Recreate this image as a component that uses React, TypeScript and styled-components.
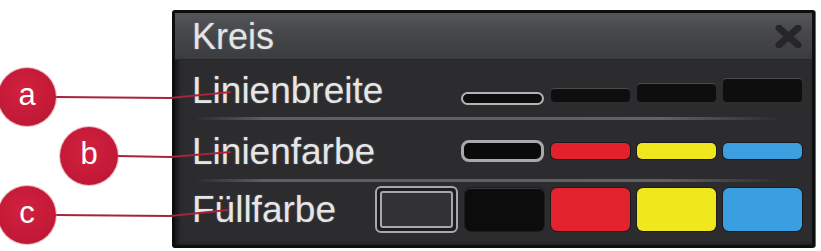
import React from 'react';
import styled, { createGlobalStyle } from 'styled-components';

const GlobalStyle = createGlobalStyle`
  html, body {
    margin: 0;
    padding: 0;
    background: #ffffff;
  }
  body {
    font-family: "Liberation Sans", Arial, sans-serif;
  }
`;

const Stage = styled.div`
  position: relative;
  width: 821px;
  height: 251px;
  overflow: hidden;
  padding: 10px 0 0 172px;
  box-sizing: border-box;
`;

const Panel = styled.div`
  width: 643px;
  height: 238px;
  box-sizing: border-box;
  border: 3px solid #0e0e0f;
  border-radius: 3px;
  background: #2c2c2e;
  box-shadow: inset 3px 0 4px rgba(0, 0, 0, 0.5), 1px 0 0 #6a6a6a;
  display: flex;
  flex-direction: column;
`;

const TitleBar = styled.div`
  height: 47px;
  flex: none;
  display: flex;
  align-items: center;
  justify-content: space-between;
  padding: 0 10px 0 17px;
  background: linear-gradient(to bottom, #55565a 0%, #47484c 40%, #3a3b3e 100%);
  box-shadow: inset 0 -1px 0 #262628;
`;

const Title = styled.span`
  font-size: 36px;
  line-height: 36px;
  color: #e4e4e6;
  text-shadow: 0 0 2px rgba(255, 255, 255, 0.25);
`;

const CloseIcon = styled.svg`
  width: 27px;
  height: 23px;
  display: block;
`;

type RowProps = { h: number; pb?: number; last?: boolean };

const Row = styled.div<RowProps>`
  height: ${(p) => p.h}px;
  flex: none;
  box-sizing: border-box;
  position: relative;
  display: flex;
  align-items: center;
  justify-content: space-between;
  padding: 0 10px ${(p) => p.pb || 0}px 17px;
  ${(p) =>
    p.last
      ? ''
      : `&::after {
    content: "";
    position: absolute;
    left: 20px;
    right: 30px;
    bottom: 0;
    height: 3px;
    background: linear-gradient(to right, rgba(100,100,102,0) 0%, #5f5f61 12%, #626264 80%, rgba(100,100,102,0) 100%);
  }`}
`;

const Label = styled.span`
  font-size: 37px;
  line-height: 37px;
  color: #e6e6e8;
  text-shadow: 0 0 2px rgba(255, 255, 255, 0.25);
  white-space: nowrap;
`;

type SwatchesProps = { align: string; pb?: number };

const Swatches = styled.div<SwatchesProps>`
  display: flex;
  gap: 7px;
  align-self: stretch;
  align-items: ${(p) => p.align};
  padding-bottom: ${(p) => p.pb || 0}px;
`;

type WidthProps = { h: number; selected?: boolean };

const LineSwatch = styled.div<WidthProps>`
  width: ${(p) => (p.selected ? 83 : 79)}px;
  height: ${(p) => p.h}px;
  box-sizing: border-box;
  border-radius: ${(p) => (p.selected ? 7 : 4)}px;
  background: #0e0e0f;
  border: ${(p) => (p.selected ? '2px solid #b4b4b6' : 'none')};
  border-top: ${(p) => (p.selected ? '2px solid #b4b4b6' : '1px solid #4d4d50')};
  margin-bottom: ${(p) => (p.selected ? -3 : 0)}px;
`;

type ColorProps = { color: string };

const ColorSwatch = styled.div<ColorProps>`
  width: 79px;
  height: 16px;
  border-radius: 5px;
  background: ${(p) => p.color};
  box-shadow: 0 0 0 1px rgba(0, 0, 0, 0.4);
`;

const SelectedLineColor = styled.div`
  width: 83px;
  height: 22px;
  box-sizing: border-box;
  border: 3px solid #a9a9ab;
  border-radius: 8px;
  background: #0a0a0b;
`;

type FillProps = { color: string; dark?: boolean };

const FillSwatch = styled.div<FillProps>`
  width: 79px;
  height: 43px;
  box-sizing: border-box;
  border-radius: 6px;
  background: ${(p) => p.color};
  border-top: ${(p) => (p.dark ? '1px solid #3a3a3c' : 'none')};
  box-shadow: 0 0 0 1px rgba(0, 0, 0, 0.35);
`;

const SelectedFill = styled.div`
  width: 83px;
  height: 47px;
  box-sizing: border-box;
  border: 2px solid #a8a8aa;
  border-radius: 6px;
  padding: 3px;
  background: #1d1d1f;
  display: flex;
`;

const SelectedFillInner = styled.div`
  flex: 1;
  border: 2px solid #a8a8aa;
  border-radius: 3px;
  background: #323234;
`;

const Leaders = styled.svg`
  position: absolute;
  left: 0;
  top: 0;
  width: 821px;
  height: 251px;
  pointer-events: none;
`;

type BadgeProps = { x: number; y: number };

const Badge = styled.div<BadgeProps>`
  position: absolute;
  left: ${(p) => p.x - 29}px;
  top: ${(p) => p.y - 29}px;
  width: 58px;
  height: 58px;
  border-radius: 50%;
  background: radial-gradient(circle at 45% 40%, #d2213f 0%, #c31a37 60%, #b0142f 100%);
  box-shadow: 0 0 0 1px rgba(220, 120, 130, 0.5);
  color: #ffffff;
  font-size: 31px;
  line-height: 54px;
  text-align: center;
`;

const badges = [
  { id: 'a', x: 27, y: 97 },
  { id: 'b', x: 89, y: 156 },
  { id: 'c', x: 27, y: 215 },
];

const leaderPaths = [
  '55,97 170,98 231,92',
  '117,156 170,157 231,152',
  '55,215 170,216 228,210',
];

export default function App() {
  return (
    <Stage>
      <GlobalStyle />
      <Panel>
        <TitleBar>
          <Title>Kreis</Title>
          <CloseIcon viewBox="0 0 27 23">
            <path d="M4 3 L23 20 M23 3 L4 20" stroke="#262628" strokeWidth="7" strokeLinecap="round" />
          </CloseIcon>
        </TitleBar>
        <Row h={60}>
          <Label>Linienbreite</Label>
          <Swatches align="flex-end" pb={18}>
            <LineSwatch h={13} selected />
            <LineSwatch h={14} />
            <LineSwatch h={19} />
            <LineSwatch h={24} />
          </Swatches>
        </Row>
        <Row h={62}>
          <Label>Linienfarbe</Label>
          <Swatches align="center">
            <SelectedLineColor />
            <ColorSwatch color="#e3212d" />
            <ColorSwatch color="#efe61e" />
            <ColorSwatch color="#3c9fe0" />
          </Swatches>
        </Row>
        <Row h={63} pb={8} last>
          <Label>Füllfarbe</Label>
          <Swatches align="center">
            <SelectedFill>
              <SelectedFillInner />
            </SelectedFill>
            <FillSwatch color="#0c0c0d" dark />
            <FillSwatch color="#e2222c" />
            <FillSwatch color="#f0e81c" />
            <FillSwatch color="#3a9fe0" />
          </Swatches>
        </Row>
      </Panel>
      <Leaders viewBox="0 0 821 251">
        {leaderPaths.map((pts) => (
          <polyline key={pts} points={pts} fill="none" stroke="#a8233c" strokeWidth="2" />
        ))}
      </Leaders>
      {badges.map((b) => (
        <Badge key={b.id} x={b.x} y={b.y}>
          {b.id}
        </Badge>
      ))}
    </Stage>
  );
}
